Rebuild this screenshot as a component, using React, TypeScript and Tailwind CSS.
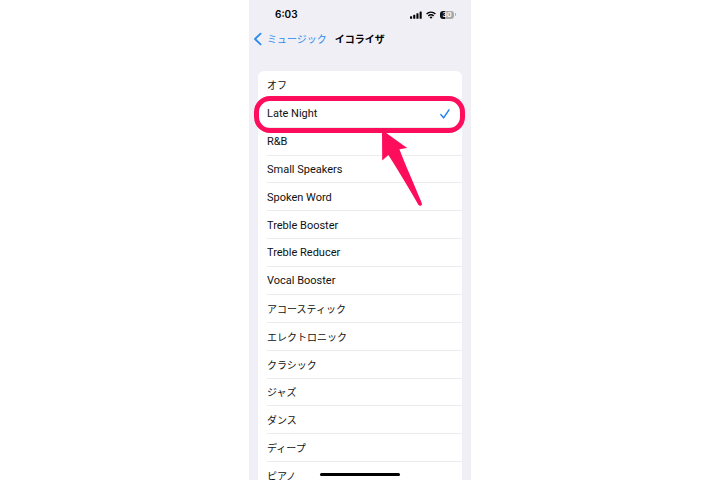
import { useState } from 'react';
import clsx from 'clsx';

const presets = [
  { name: 'オフ', lang: 'ja' },
  { name: 'Late Night', lang: 'en' },
  { name: 'R&B', lang: 'en' },
  { name: 'Small Speakers', lang: 'en' },
  { name: 'Spoken Word', lang: 'en' },
  { name: 'Treble Booster', lang: 'en' },
  { name: 'Treble Reducer', lang: 'en' },
  { name: 'Vocal Booster', lang: 'en' },
  { name: 'アコースティック', lang: 'ja' },
  { name: 'エレクトロニック', lang: 'ja' },
  { name: 'クラシック', lang: 'ja' },
  { name: 'ジャズ', lang: 'ja' },
  { name: 'ダンス', lang: 'ja' },
  { name: 'ディープ', lang: 'ja' },
  { name: 'ピアノ', lang: 'ja' },
];

const SignalIcon = () => (
  <svg width="12" height="8" viewBox="0 0 12 8" fill="currentColor">
    <rect x="0" y="5.2" width="2.1" height="2.6" rx="0.6" />
    <rect x="3.2" y="3.8" width="2.1" height="4" rx="0.6" />
    <rect x="6.4" y="2.2" width="2.1" height="5.6" rx="0.6" />
    <rect x="9.6" y="0.4" width="2.1" height="7.4" rx="0.6" />
  </svg>
);

const WifiIcon = () => (
  <svg width="10" height="8" viewBox="0 0 10 8" fill="none" stroke="currentColor" strokeWidth="1.4">
    <path d="M0.6 3A6.2 6.2 0 0 1 9.4 3" />
    <path d="M2.3 4.9A3.8 3.8 0 0 1 7.7 4.9" />
    <path d="M5 7.8L3.5 6.2A2.1 2.1 0 0 1 6.5 6.2Z" fill="currentColor" stroke="none" />
  </svg>
);

const Battery = () => (
  <div className="flex items-center gap-px">
    <div className="flex h-2 w-[14px] items-center justify-center rounded-[3px] bg-linear-to-r from-[#111111] from-35% to-[#a9a9ad] to-35% font-['Roboto',sans-serif] text-[8px] leading-none font-medium text-white">
      30
    </div>
    <div className="h-[3px] w-px rounded-r-full bg-[#a9a9ad]" />
  </div>
);

const StatusBar = () => (
  <div className="flex h-7 items-center justify-between pt-px pr-[15px] pl-[26px] text-black">
    <span className="text-[10px] font-semibold">6:03</span>
    <div className="flex items-center gap-1">
      <SignalIcon />
      <WifiIcon />
      <Battery />
    </div>
  </div>
);

const NavBar = () => (
  <header className="flex h-[22px] items-center gap-2 pl-1 text-[10px]">
    <button type="button" className="flex items-center gap-1 text-[#2a8cee]">
      <svg width="10" height="14" viewBox="0 0 10 14" fill="none" stroke="currentColor" strokeWidth="1.8" strokeLinecap="round" strokeLinejoin="round">
        <path d="M7.6 1.6L2 7L7.6 12.4" />
      </svg>
      ミュージック
    </button>
    <h1 className="font-bold text-black">イコライザ</h1>
  </header>
);

// Ring and arrow that point out the selected row
const Callout = () => (
  <>
    <div className="pointer-events-none absolute -top-[3px] -right-[3px] -bottom-[6px] -left-1 z-10 rounded-2xl border-5 border-[#fd0d5c]" />
    <svg className="pointer-events-none absolute top-[31px] right-[39px] z-10" width="42" height="78" viewBox="0 0 42 78" fill="#fd0d5c">
      <path d="M1 0L26.2 18L18.4 19.2C24 34 33 54 40.8 73Q41.4 75.2 39.8 75.8Q38.2 76.2 37.2 74.4C28 58 18 42 7.4 25L1.2 30.5Z" />
    </svg>
  </>
);

interface PresetRowProps {
  name: string;
  lang: string;
  selected: boolean;
  first: boolean;
  onSelect: () => void;
}

const PresetRow = ({ name, lang, selected, first, onSelect }: PresetRowProps) => (
  <li className="relative pl-[9px]">
    <label className={clsx('flex h-full items-center justify-between pt-0.5 pr-3', !first && 'border-t border-[#ececee]')}>
      <span lang={lang} className={lang === 'en' ? "font-['Roboto',sans-serif] text-[11px]" : 'text-[10px]'}>
        {name}
      </span>
      <input type="radio" name="preset" checked={selected} onChange={onSelect} className="appearance-none" />
      {selected && (
        <svg width="10" height="10" viewBox="0 0 10 10" fill="none" stroke="#1a7cf0" strokeWidth="1.4" strokeLinecap="round" strokeLinejoin="round">
          <path d="M0.9 5.6L3.6 8.8L9 0.9" />
        </svg>
      )}
    </label>
    {selected && <Callout />}
  </li>
);

export default function App() {
  const [selected, setSelected] = useState('Late Night');

  return (
    <div className="flex h-screen justify-center overflow-hidden bg-white font-['Inter','Noto_Sans_CJK_JP',sans-serif]">
      <main className="relative w-full max-w-[222px] overflow-hidden bg-[#f0eff5]">
        <StatusBar />
        <NavBar />
        <ul className="mx-[9px] mt-[21px] grid h-[418px] auto-rows-fr rounded-t-md bg-white text-[#111111]">
          {presets.map(({ name, lang }, i) => (
            <PresetRow
              key={name}
              name={name}
              lang={lang}
              first={i === 0}
              selected={name === selected}
              onSelect={() => setSelected(name)}
            />
          ))}
        </ul>
        <div className="absolute inset-x-0 bottom-1 flex justify-center">
          <div className="h-[3px] w-20 rounded-full bg-black" />
        </div>
      </main>
    </div>
  );
}
